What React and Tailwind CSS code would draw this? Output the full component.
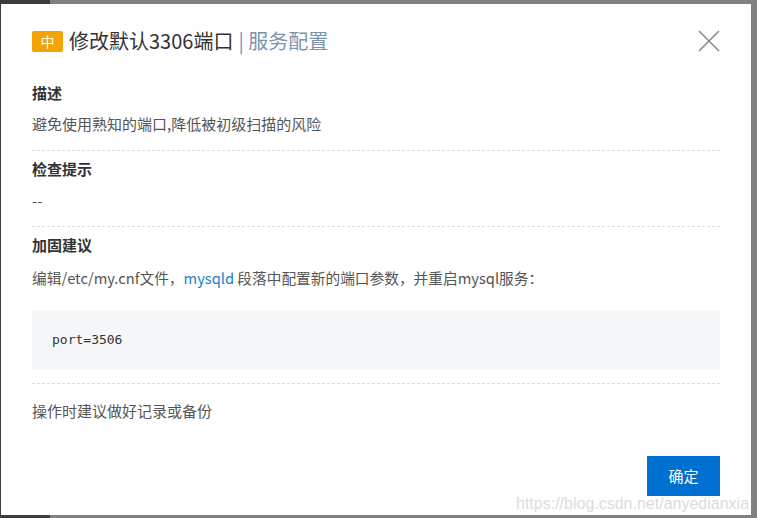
export default function App() {
  const font = { fontFamily: '"Noto Sans CJK SC", "Noto Sans", sans-serif' };
  return (
    <div className="relative w-[757px] h-[518px] overflow-hidden flex" style={font}>
      <div className="w-[50px] h-full bg-[#3c3c3c]" />
      <div className="flex-1 h-full bg-[#808080]" />

      <div className="absolute left-[1px] top-[4px] w-[750px] h-[511px] bg-white flex flex-col px-[31px]">
        <div className="pt-[22px] flex items-center h-[52px]">
          <div className="flex items-center h-[30px] w-full">
            <span className="w-[31px] h-[21px] rounded-[2px] bg-[#f2a404] text-white text-[14px] leading-[21px] flex items-center justify-center mr-[6px]">
              中
            </span>
            <span className="text-[20px] leading-[30px] text-[#333]">修改默认3306端口</span>
            <span className="text-[20px] leading-[30px] text-[#7b93ad] ml-[5px]">| 服务配置</span>
            <div className="flex-1" />
            <svg width="22" height="22" viewBox="0 0 22 22">
              <path d="M1 1 L21 21 M21 1 L1 21" stroke="#8a8a8a" strokeWidth="1.6" fill="none" />
            </svg>
          </div>
        </div>

        <div className="pt-[27px] pb-[15px] border-b border-dashed border-[#dcdcdc]">
          <div className="text-[15px] leading-[20px] font-bold text-[#333]">描述</div>
          <div className="mt-[10px] text-[15px] leading-[22px] text-[#555]">避免使用熟知的端口,降低被初级扫描的风险</div>
        </div>

        <div className="pt-[8px] pb-[14px] border-b border-dashed border-[#dcdcdc]">
          <div className="text-[15px] leading-[20px] font-bold text-[#333]">检查提示</div>
          <div className="mt-[11px] text-[15px] leading-[22px] text-[#555]">--</div>
        </div>

        <div className="pt-[8px] pb-[13px] border-b border-dashed border-[#dcdcdc]">
          <div className="text-[15px] leading-[20px] font-bold text-[#333]">加固建议</div>
          <div className="mt-[12px] text-[14.7px] leading-[22px] text-[#555]">
            编辑/etc/my.cnf文件，<span className="text-[#1a7fd4]">mysqld</span> 段落中配置新的端口参数，并重启mysql服务：
          </div>
          <div className="mt-[21px] h-[60px] rounded-[4px] bg-[#f6f7f9] flex items-center px-[20px]">
            <span className="text-[13px] text-[#333]" style={{ fontFamily: '"DejaVu Sans Mono", "Liberation Mono", monospace' }}>
              port=3506
            </span>
          </div>
        </div>

        <div className="pt-[16px]">
          <div className="text-[15px] leading-[22px] text-[#555]">操作时建议做好记录或备份</div>
        </div>

        <div className="mt-[34px] flex justify-end">
          <button className="w-[73px] h-[40px] bg-[#0070d0] text-white text-[15px] flex items-center justify-center">
            确定
          </button>
        </div>
      </div>

      <div
        className="absolute left-[516px] top-[494px] text-[16px] leading-[20px] text-[rgba(210,210,210,0.8)] whitespace-nowrap"
        style={{ fontFamily: '"Liberation Sans", Arial, sans-serif' }}
      >
        https://blog.csdn.net/anyedianxia
      </div>
    </div>
  );
}
